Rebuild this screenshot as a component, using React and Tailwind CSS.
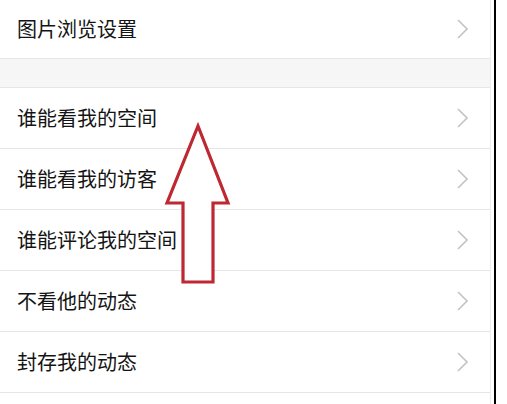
const rows = [
  "谁能看我的空间",
  "谁能看我的访客",
  "谁能评论我的空间",
  "不看他的动态",
  "封存我的动态",
];

function Chevron() {
  return (
    <svg width="13" height="22" viewBox="0 0 13 22" fill="none">
      <polyline points="2,2 11,11 2,20" stroke="#c4c4c4" strokeWidth="1.7" />
    </svg>
  );
}

function Row({ label, h = "h-[61px]" }) {
  return (
    <div className={`${h} flex items-center justify-between pl-[17px] pr-[21px] bg-white border-b border-[#e6e6e6]`}>
      <span className="text-[20px] text-[#141414] leading-none">{label}</span>
      <Chevron />
    </div>
  );
}

export default function App() {
  return (
    <div
      className="relative w-[507px] h-[404px] bg-white flex overflow-hidden"
      style={{ fontFamily: '"Noto Sans CJK SC", "Noto Sans", sans-serif' }}
    >
      <div className="w-[491px] h-full flex flex-col border-r border-[#ececec]">
        <Row label="图片浏览设置" h="h-[59px]" />
        <div className="h-[29px] bg-[#f6f6f6] border-b border-[#e6e6e6]"></div>
        {rows.map((r) => (
          <Row key={r} label={r} />
        ))}
        <div className="flex-1 bg-white"></div>
      </div>
      <div className="w-[3px]"></div>
      <div className="w-[2px] h-full bg-black"></div>
      <div className="flex-1 bg-white"></div>

      {/* red arrow overlay */}
      <svg className="absolute left-0 top-0" width="507" height="404" viewBox="0 0 507 404">
        <polygon
          points="198,126 228,203 213,203 213,282 183,282 183,203 167,203"
          fill="white"
          stroke="#bd2833"
          strokeWidth="3.2"
          strokeLinejoin="miter"
        />
      </svg>
    </div>
  );
}
